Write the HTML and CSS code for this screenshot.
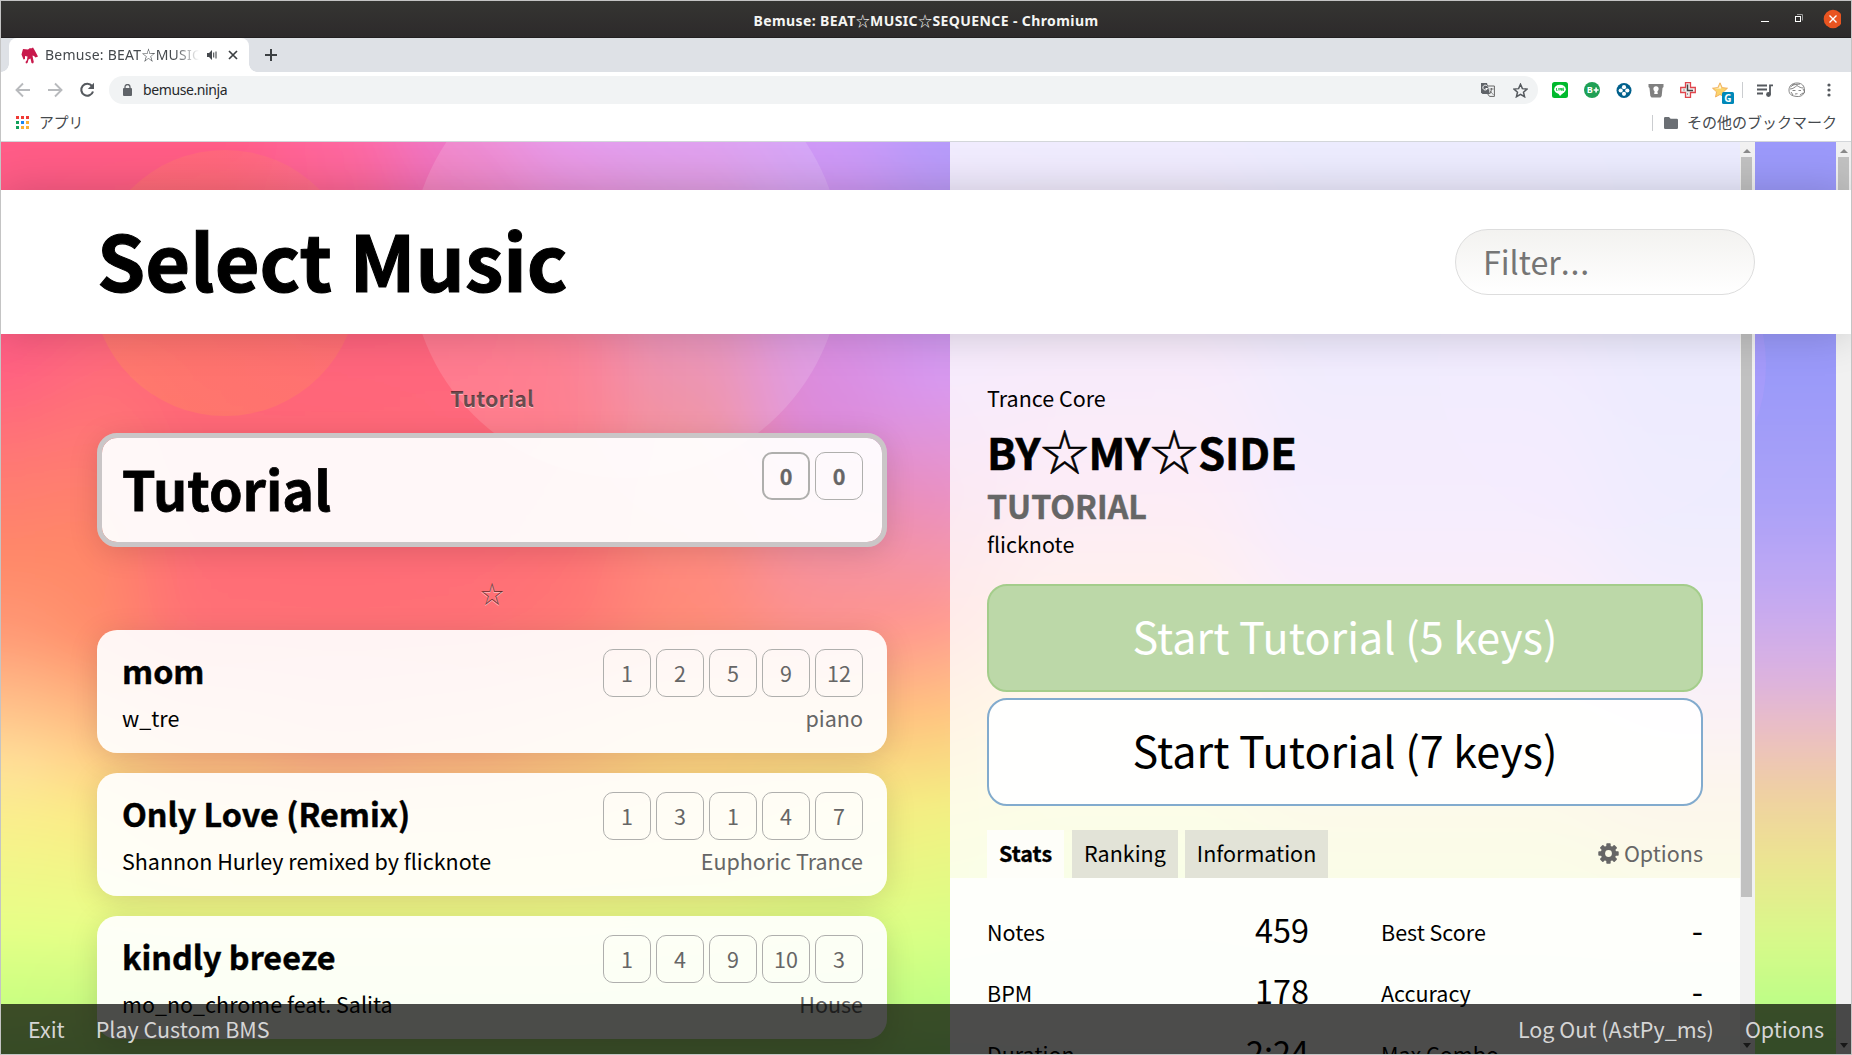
FILE: index.html
```html
<!DOCTYPE html>
<html lang="ja">
<head>
<meta charset="utf-8">
<title>Bemuse: BEAT☆MUSIC☆SEQUENCE</title>
<link rel="stylesheet" href="styles.css">
</head>
<body>
<div class="window">
  <div class="titlebar">
    <div class="titlebar-text">Bemuse: BEAT<span class="star">☆</span>MUSIC<span class="star">☆</span>SEQUENCE - Chromium</div>
    <svg class="window-buttons" width="80" height="20" viewBox="0 0 80 20">
      <path d="M0 12.500h8" stroke="#fff"/>
      <rect x="34.500" y="7.500" width="5" height="5" fill="none" stroke="#fff"/>
      <path d="M36 5.500h5.500v6" fill="none" stroke="#999"/>
      <circle cx="72" cy="10" r="9.300" fill="#e95420"/>
      <path d="M68.500 6.500l7 7m0-7l-7 7" stroke="#fff" stroke-width="1.400"/>
    </svg>
  </div>

  <div class="tabstrip">
    <div class="tab">
      <svg width="17" height="17" viewBox="0 0 17 17" fill="#c8194c"><path d="M2 2l5 .6L9 1l1 .5L12 .5l1.500 2.500L17 9.500l-2.500 1L13 9l-1.500-.5.5 3 .8 3.500-.8 1.500-1.500-.5-1-4.500-2 1-1 3.500-1.500.5-.5-1.500 1.500-2 .5-3.500L4 9v3l-1.500.5L.5 7.500z"/></svg>
      <span class="tab-title">Bemuse: BEAT<span class="star">☆</span>MUSIC</span>
      <svg class="speaker" width="12" height="12" viewBox="0 0 12 12"><path d="M1 4h2l3-3v10L3 8H1z" fill="#45494d"/><path d="M7.700 3.500v5M10 2.500v7" stroke="#45494d" stroke-width="1.100" fill="none"/></svg>
      <svg class="close" width="10" height="10" viewBox="0 0 10 10"><path d="M1 1l8 8m0-8l-8 8" stroke="#3c4043" stroke-width="1.700"/></svg>
    </div>
    <svg class="newtab" width="12" height="12" viewBox="0 0 12 12"><path d="M6 0v12M0 6h12" stroke="#3c4043" stroke-width="2"/></svg>
  </div>

  <div class="toolbar">
    <svg width="16" height="16" viewBox="0 0 16 16" fill="none" stroke="#b8babd" stroke-width="1.900"><path d="M15 8H2M8 1.500L1.500 8 8 14.500"/></svg>
    <svg width="16" height="16" viewBox="0 0 16 16" fill="none" stroke="#b8babd" stroke-width="1.900"><path d="M1 8h13M8 1.500L14.500 8 8 14.500"/></svg>
    <svg width="16" height="16" viewBox="0 0 16 16"><path d="M13 4A6 6 0 1 0 14 9.500" fill="none" stroke="#55595e" stroke-width="2.100"/><path d="M15 .8V7H8.800z" fill="#55595e"/></svg>
    <div class="omnibox">
      <svg width="9" height="12" viewBox="0 0 9 12"><rect y="4" width="9" height="8" rx="1" fill="#5f6368"/><path d="M2 5V3a2.500 2.500 0 0 1 5 0v2" fill="none" stroke="#5f6368" stroke-width="1.300"/></svg>
      <span class="url">bemuse.ninja</span>
      <svg class="translate" width="14" height="14" viewBox="0 0 14 14"><path d="M6 3h7.400v10.400H8.500L6 10" fill="#f1f3f4" stroke="#666"/><path d="M0 0h6l3 11H1.500L0 9.500z" fill="#5f6368"/><path d="M6.300 3.300A2.400 2.400 0 1 0 6.500 5.500H4.500" fill="none" stroke="#fff"/><path d="M8.500 6h4M10.500 5v1c0 2-1 4-2 5M9 7.500c1 2 2 3 3.500 4" fill="none" stroke="#666" stroke-width=".9"/></svg>
      <svg width="15" height="15" viewBox="0 0 24 24"><path d="M12 2l3 7 7.500.7-5.700 5 1.700 7.300-6.500-3.900L5.500 22l1.700-7.300-5.700-5L9 9z" fill="none" stroke="#55595e" stroke-width="2.400"/></svg>
    </div>
    <div class="extensions">
      <svg width="16" height="16" viewBox="0 0 16 16"><rect width="16" height="16" rx="2.500" fill="#00b92d"/><ellipse cx="8" cy="7.300" rx="5.800" ry="4.600" fill="#fff"/><path d="M6 11l2 3 4-4z" fill="#fff"/><path d="M4.500 6v2.500h1M6.800 6v2.500M8 8.500V6l1.500 2.500V6M12 6.200h-1.300v2.200H12M10.700 7.300H12" stroke="#00b92d" stroke-width=".8" fill="none"/></svg>
      <svg width="16" height="16" viewBox="0 0 16 16"><circle cx="8" cy="8" r="8" fill="#1fa055"/><text x="2.700" y="11.300" class="glyph-b">B</text><path d="M12.100 5.500v5M9.600 8h5" stroke="#fff" stroke-width="1.600"/></svg>
      <svg width="16" height="15" viewBox="-.5 0 16 15"><circle cx="7.500" cy="7.500" r="7.500" fill="#00608c"/><g fill="#fff"><circle cx="7.500" cy="4.200" r="2.100"/><circle cx="7.500" cy="10.800" r="2.100"/><circle cx="4.200" cy="7.500" r="2.100"/><circle cx="10.800" cy="7.500" r="2.100"/></g></svg>
      <svg width="16" height="15" viewBox="0 0 15 15"><path d="M0 1h15v3l-1 1-.8 8-1.200 1.500H3L1.800 13 1 5 0 4z" fill="#808080"/><circle cx="7.500" cy="5.800" r="2.600" fill="#fff"/><path d="M6.400 6h2.200l.7 5H5.700z" fill="#fff"/></svg>
      <svg width="16" height="16" viewBox="0 0 16 16"><path d="M5.500.7h5v4.800h4.800v5h-4.800v4.800h-5v-4.800H.7v-5h4.800z" fill="#eef0f0" stroke="#e0454c" stroke-width="1.300"/><path d="M7.500 2.500v6H13" stroke="#444" stroke-width="1.500" fill="none"/><path d="M3 8h2M7.500 13v-2" stroke="#999"/></svg>
      <svg class="star-badge" width="22" height="22" viewBox="0 0 22 22"><path d="M8 .8l2.200 4.800 5.300.6-4 3.600 1 5.200L8 12.500 3.500 15l1-5.200-4-3.600 5.300-.6z" fill="#fbd46c" stroke="#eda552" stroke-width=".8"/><path d="M8 2.500l1 4-7-.2 5.200-.5z" fill="#fff"/><rect x="10" y="10" width="12" height="12" rx="1.500" fill="#0088b8"/><text x="12.300" y="19.600" class="glyph-g">G</text></svg>
    </div>
    <i class="divider"></i>
    <svg class="queue" width="16" height="13" viewBox="0 0 16 13"><path d="M0 1.500h10M0 5.500h10M0 9.500h6" stroke="#55595e" stroke-width="1.800"/><path d="M13 10.500V1.300h3" fill="none" stroke="#55595e" stroke-width="1.800"/><circle cx="11.500" cy="10.500" r="2.400" fill="#55595e"/></svg>
    <svg class="avatar" width="18" height="16" viewBox="0 0 18 16" fill="none" stroke="#777" stroke-width=".9"><path d="M9 1C4 1 1 4 1 8s2 6 8 6.500c5 .3 7.500-2.500 7.500-6.500S14 1 9 1z"/><path d="M2 7c3 0 5-2 7-3.500C11 5 13 6 15.500 6M4.500 8.500h3M10.500 8.500h2.500M7 12l2.500-.3M15 7l1.800 3-2 2M4 3l8-1M3 10l2 3M12 13l3-2M2.500 5l4-3"/></svg>
    <svg class="menu" width="4" height="14" viewBox="0 0 4 14" fill="#55595e"><circle cx="2" cy="2" r="1.600"/><circle cx="2" cy="7" r="1.600"/><circle cx="2" cy="12" r="1.600"/></svg>
  </div>

  <div class="bookmarks">
    <svg width="13" height="13" viewBox="0 0 13 13"><path d="M0 0h3v3H0zM5 0h3v3H5zM10 0h3v3h-3z" fill="#f03a35"/><path d="M0 5h3v3H0zM0 10h3v3H0z" fill="#129f5a"/><path d="M5 5h3v3H5z" fill="#1a87f0"/><path d="M10 5h3v3h-3zM5 10h3v3H5zM10 10h3v3h-3z" fill="#fbb034"/></svg>
    <span class="apps">アプリ</span>
    <i class="divider"></i>
    <svg width="14" height="12" viewBox="0 0 14 12"><path d="M0 1.200Q0 0 1.200 0H5l1.600 1.700h6.200Q14 1.700 14 3v7.700Q14 12 12.800 12H1.200Q0 12 0 10.800z" fill="#6b6f74"/></svg>
    <span class="other">その他のブックマーク</span>
  </div>

  <div class="page">
    <svg class="backdrop" viewBox="1 142 1835 912" preserveAspectRatio="none">
      <defs>
        <filter id="soft" x="-10%" y="-5%" width="120%" height="110%"><feGaussianBlur stdDeviation="38 14"/></filter>
        <linearGradient id="c0" x2="0" y2="1"><stop offset="0" stop-color="#ff5b87"/><stop offset=".2" stop-color="#ff5a86"/><stop offset=".26" stop-color="#ff5f82"/><stop offset=".36" stop-color="#ff7874"/><stop offset=".46" stop-color="#ff8969"/><stop offset=".53" stop-color="#ff9875"/><stop offset=".6" stop-color="#ffbb88"/><stop offset=".67" stop-color="#ffe099"/><stop offset=".74" stop-color="#f8f18b"/><stop offset=".84" stop-color="#e6ff87"/><stop offset=".93" stop-color="#c5ff80"/><stop offset="1" stop-color="#a8f57c"/></linearGradient>
        <linearGradient id="c1" x2="0" y2="1"><stop offset="0" stop-color="#ff5a86"/><stop offset=".2" stop-color="#ff6380"/><stop offset=".33" stop-color="#ff7874"/><stop offset=".43" stop-color="#ff8668"/><stop offset=".54" stop-color="#ff8d68"/><stop offset=".64" stop-color="#ffc283"/><stop offset=".72" stop-color="#fdea85"/><stop offset=".84" stop-color="#e8ff88"/><stop offset="1" stop-color="#a8f57c"/></linearGradient>
        <linearGradient id="c2" x2="0" y2="1"><stop offset="0" stop-color="#ff5a88"/><stop offset=".2" stop-color="#ff6579"/><stop offset=".33" stop-color="#ff6777"/><stop offset=".53" stop-color="#ff7076"/><stop offset=".64" stop-color="#ffad80"/><stop offset=".74" stop-color="#ffdc85"/><stop offset=".84" stop-color="#ecff88"/><stop offset="1" stop-color="#a8f57c"/></linearGradient>
        <linearGradient id="c3" x2="0" y2="1"><stop offset="0" stop-color="#fe67a4"/><stop offset=".2" stop-color="#ff637f"/><stop offset=".33" stop-color="#ff6777"/><stop offset=".53" stop-color="#ff6f76"/><stop offset=".64" stop-color="#ff9d84"/><stop offset=".74" stop-color="#ffdc85"/><stop offset=".84" stop-color="#ecff88"/><stop offset="1" stop-color="#a8f57c"/></linearGradient>
        <linearGradient id="c4" x2="0" y2="1"><stop offset="0" stop-color="#ea7cd0"/><stop offset=".1" stop-color="#f070b8"/><stop offset=".2" stop-color="#ff6480"/><stop offset=".33" stop-color="#ff687a"/><stop offset=".53" stop-color="#ff7076"/><stop offset=".64" stop-color="#ffa880"/><stop offset=".74" stop-color="#ffdc85"/><stop offset=".84" stop-color="#ecff88"/><stop offset="1" stop-color="#a8f57c"/></linearGradient>
        <linearGradient id="c5" x2="0" y2="1"><stop offset="0" stop-color="#df90f4"/><stop offset=".12" stop-color="#e87cc8"/><stop offset=".23" stop-color="#fd6c84"/><stop offset=".34" stop-color="#fe6c7a"/><stop offset=".44" stop-color="#ff7074"/><stop offset=".53" stop-color="#ff7873"/><stop offset=".64" stop-color="#ffb880"/><stop offset=".74" stop-color="#ffe085"/><stop offset=".84" stop-color="#ecff88"/><stop offset="1" stop-color="#a8f57c"/></linearGradient>
        <linearGradient id="c6" x2="0" y2="1"><stop offset="0" stop-color="#d894f7"/><stop offset=".2" stop-color="#e584b8"/><stop offset=".3" stop-color="#ec849c"/><stop offset=".42" stop-color="#ff8880"/><stop offset=".53" stop-color="#ff8c78"/><stop offset=".64" stop-color="#ffcc80"/><stop offset=".74" stop-color="#ffe585"/><stop offset=".84" stop-color="#e6ff88"/><stop offset="1" stop-color="#a8f57c"/></linearGradient>
        <linearGradient id="c7" x2="0" y2="1"><stop offset="0" stop-color="#cb9bfb"/><stop offset=".2" stop-color="#d890e6"/><stop offset=".32" stop-color="#dc8bdc"/><stop offset=".42" stop-color="#f090a8"/><stop offset=".54" stop-color="#ff938c"/><stop offset=".62" stop-color="#ffbf80"/><stop offset=".71" stop-color="#f9e985"/><stop offset=".84" stop-color="#dfff85"/><stop offset="1" stop-color="#a8f57c"/></linearGradient>
        <linearGradient id="c8" x2="0" y2="1"><stop offset="0" stop-color="#b19bfc"/><stop offset=".2" stop-color="#c998f0"/><stop offset=".28" stop-color="#d899f0"/><stop offset=".4" stop-color="#e98fc0"/><stop offset=".52" stop-color="#ff9890"/><stop offset=".62" stop-color="#ffc480"/><stop offset=".72" stop-color="#f3f082"/><stop offset=".84" stop-color="#daff85"/><stop offset=".94" stop-color="#b8ff84"/><stop offset="1" stop-color="#a0f57c"/></linearGradient>
        <linearGradient id="c9" x2="0" y2="1"><stop offset="0" stop-color="#a89bfa"/><stop offset=".2" stop-color="#cc9bf0"/><stop offset=".38" stop-color="#f0a0d8"/><stop offset=".5" stop-color="#ffb4a8"/><stop offset=".64" stop-color="#fbe690"/><stop offset=".76" stop-color="#e6fa88"/><stop offset="1" stop-color="#a8f98c"/></linearGradient>
        <linearGradient id="c10" x2="0" y2="1"><stop offset="0" stop-color="#9c9bf8"/><stop offset=".22" stop-color="#b09cf8"/><stop offset=".42" stop-color="#d0a4f4"/><stop offset=".54" stop-color="#f2a8d8"/><stop offset=".66" stop-color="#f5d8a0"/><stop offset=".78" stop-color="#e8f088"/><stop offset="1" stop-color="#a8f9a0"/></linearGradient>
        <linearGradient id="c11" x2="0" y2="1"><stop offset="0" stop-color="#9b99fa"/><stop offset=".26" stop-color="#9999f9"/><stop offset=".41" stop-color="#aca2f8"/><stop offset=".5" stop-color="#c4a9f2"/><stop offset=".58" stop-color="#dcb2e0"/><stop offset=".64" stop-color="#ebbfc2"/><stop offset=".7" stop-color="#f0d0a2"/><stop offset=".77" stop-color="#ece491"/><stop offset=".85" stop-color="#d8f98a"/><stop offset=".94" stop-color="#b5ff86"/><stop offset="1" stop-color="#a0f57c"/></linearGradient>
        <linearGradient id="orb" x1="1" y1="0" x2=".3" y2="1"><stop offset="0" stop-color="#ff9a50" stop-opacity=".12"/><stop offset="1" stop-color="#ff9a50" stop-opacity=".28"/></linearGradient>
      </defs>
      <g filter="url(#soft)">
        <rect x="-150" y="112" width="210" height="972" fill="url(#c0)"/>
        <rect x="60" y="112" width="80" height="972" fill="url(#c1)"/>
        <rect x="140" y="112" width="140" height="972" fill="url(#c2)"/>
        <rect x="280" y="112" width="120" height="972" fill="url(#c3)"/>
        <rect x="400" y="112" width="120" height="972" fill="url(#c4)"/>
        <rect x="520" y="112" width="100" height="972" fill="url(#c5)"/>
        <rect x="620" y="112" width="140" height="972" fill="url(#c6)"/>
        <rect x="760" y="112" width="130" height="972" fill="url(#c7)"/>
        <rect x="890" y="112" width="110" height="972" fill="url(#c8)"/>
        <rect x="1000" y="112" width="250" height="972" fill="url(#c9)"/>
        <rect x="1250" y="112" width="350" height="972" fill="url(#c10)"/>
        <rect x="1600" y="112" width="400" height="972" fill="url(#c11)"/>
      </g>
      <circle cx="225" cy="283" r="133" fill="url(#orb)"/>
      <circle cx="626" cy="262" r="216" fill="#fff" fill-opacity=".14"/>
      <circle cx="1602" cy="365" r="164" fill="#c8a0ff" fill-opacity=".22"/>
    </svg>

    <div class="columns">
      <div class="song-list">
        <h2 class="group">Tutorial</h2>
        <div class="song song-active">
          <div class="song-row"><h3>Tutorial</h3><div class="levels bold"><span class="current">0</span><span>0</span></div></div>
        </div>
        <h2 class="group second">☆</h2>
        <div class="song">
          <div class="song-row"><h3>mom</h3><div class="levels"><span>1</span><span>2</span><span>5</span><span>9</span><span>12</span></div></div>
          <div class="song-meta"><span>w_tre</span><span class="genre">piano</span></div>
        </div>
        <div class="song">
          <div class="song-row"><h3>Only Love (Remix)</h3><div class="levels"><span>1</span><span>3</span><span>1</span><span>4</span><span>7</span></div></div>
          <div class="song-meta"><span>Shannon Hurley remixed by flicknote</span><span class="genre">Euphoric Trance</span></div>
        </div>
        <div class="song">
          <div class="song-row"><h3>kindly breeze</h3><div class="levels"><span>1</span><span>4</span><span>9</span><span>10</span><span>3</span></div></div>
          <div class="song-meta"><span>mo_no_chrome feat. Salita</span><span class="genre">House</span></div>
        </div>
      </div>

      <div class="detail">
        <div class="detail-body">
          <div class="detail-top">
            <div class="d-genre">Trance Core</div>
            <h1 class="d-title">BY<span class="big-star">☆</span>MY<span class="big-star">☆</span>SIDE</h1>
            <div class="d-subtitle">TUTORIAL</div>
            <div class="d-artist">flicknote</div>
            <div class="play play-5">Start Tutorial (5 keys)</div>
            <div class="play play-7">Start Tutorial (7 keys)</div>
            <div class="tabs">
              <span class="dtab dtab-on">Stats</span><span class="dtab">Ranking</span><span class="dtab">Information</span>
              <span class="d-options"><svg width="21" height="21" viewBox="-10.500 -10.500 21 21" fill="#666"><g><rect x="-2.200" y="-10.200" width="4.400" height="20.400" rx=".8"/><rect x="-2.200" y="-10.200" width="4.400" height="20.400" rx=".8" transform="rotate(45)"/><rect x="-2.200" y="-10.200" width="4.400" height="20.400" rx=".8" transform="rotate(90)"/><rect x="-2.200" y="-10.200" width="4.400" height="20.400" rx=".8" transform="rotate(135)"/></g><circle r="5.500" fill="none" stroke="#666" stroke-width="4.500"/><circle r="3.400" fill="#fcfbe9"/></svg>Options</span>
            </div>
          </div>
          <div class="stats">
            <div class="stat"><span>Notes</span><b>459</b></div><div class="stat"><span>Best Score</span><b>-</b></div>
            <div class="stat"><span>BPM</span><b>178</b></div><div class="stat"><span>Accuracy</span><b>-</b></div>
            <div class="stat"><span>Duration</span><b>2:24</b></div><div class="stat"><span>Max Combo</span><b>-</b></div>
          </div>
        </div>
        <div class="scrollbar inner-scroll"><i class="up"></i><i class="thumb thumb-long"></i><i class="down"></i></div>
      </div>
    </div>
    <div class="scrollbar page-scroll"><i class="up"></i><i class="thumb"></i><i class="down"></i></div>

    <div class="header"><div class="heading">Select Music</div><div class="filter">Filter<span class="dots">...</span></div></div>
    <div class="bottombar"><span>Exit</span><span>Play Custom BMS</span><span class="push">Log Out (AstPy_ms)</span><span>Options</span></div>
  </div>
</div>
</body>
</html>
```
FILE: styles.css
```css
* { box-sizing: border-box; }
body { margin: 0; background: #c4c4c4; }
h1, h2, h3 { margin: 0; font: inherit; }
svg { display: block; flex: none; }

.window {
  width: 1852px; height: 1055px; padding: 1px;
  display: flex; flex-direction: column;
  font-family: "Noto Sans", "Noto Sans CJK JP", sans-serif;
  overflow: hidden;
}
.star { font-family: "Noto Sans CJK JP", sans-serif; font-weight: 400; line-height: 1; }

/* Browser chrome */
.titlebar {
  height: 37px; flex: none; display: grid; grid-template-columns: 1fr auto 1fr; align-items: center;
  background: linear-gradient(#353532, #2d2a2b); border-bottom: 1px solid #222021;
  color: #f5f5f3; font-size: 14px; font-weight: 700; line-height: 20px; letter-spacing: .4px;
}
.titlebar-text { grid-column: 2; padding-top: 4px; white-space: nowrap; }
.window-buttons { justify-self: end; margin-right: 10px; }

.tabstrip { height: 34px; flex: none; display: flex; align-items: center; background: #dee1e6; padding-left: 8px; }
.tab {
  position: relative; width: 240px; height: 34px; display: flex; align-items: center; padding-left: 12px;
  background: #fff; border-radius: 8px 8px 0 0; color: #45494d; font-size: 14px;
}
.tab::before, .tab::after { content: ""; position: absolute; bottom: 0; width: 8px; height: 8px; }
.tab::before { left: -8px; background: radial-gradient(circle at 0 0, transparent 7.5px, #fff 8px); }
.tab::after { right: -8px; background: radial-gradient(circle at 100% 0, transparent 7.5px, #fff 8px); }
.tab-title {
  width: 154px; margin-left: 7px; overflow: hidden; white-space: nowrap; line-height: 20px; letter-spacing: .25px;
  -webkit-mask-image: linear-gradient(90deg, #000 84%, transparent);
  mask-image: linear-gradient(90deg, #000 84%, transparent);
}
.speaker { margin-left: 7px; }
.close { margin-left: 10px; }
.newtab { margin-left: 16px; }

.toolbar { height: 36px; flex: none; display: flex; align-items: center; background: #fff; padding: 0 18px 0 14px; gap: 16px; }
.omnibox {
  flex: none; width: 1429px; height: 28px; margin-left: -2px; border-radius: 14px; background: #f1f3f4;
  display: flex; align-items: center; padding: 0 10px 0 14px; color: #26282b; font-size: 14px;
}
.url { margin-left: 11px; line-height: 20px; letter-spacing: -.4px; }
.translate { margin-left: auto; margin-right: 18px; }
.extensions { display: flex; align-items: center; gap: 16px; margin-left: -2px; width: 190px; flex: none; }
.star-badge { margin-top: 6px; }
.glyph-b { font: 700 9px "Open Sans", sans-serif; fill: #fff; }
.glyph-g { font: 700 10px "Open Sans", sans-serif; fill: #fff; }
.divider { width: 1px; height: 16px; background: #cbcdd0; flex: none; }
.toolbar .divider { margin-left: -16px; }
.queue { margin-left: -2px; }
.avatar { margin-left: -1px; }
.menu { margin-left: 5px; }

.bookmarks {
  height: 34px; flex: none; display: flex; align-items: center; background: #fff; padding: 0 14px 4px 15px;
  border-bottom: 1px solid #d3d6da; color: #45494d; font: 15px/24px "Noto Sans CJK JP", sans-serif;
}
.bookmarks .apps { margin-left: 10px; margin-right: auto; font-size: 14.8px; padding-bottom: 2px; }
.bookmarks .other { padding-bottom: 1px; }
.bookmarks .divider + svg { margin-left: 11px; margin-right: 9px; }

/* Game page */
.page {
  position: relative; flex: 1; min-height: 0; overflow: hidden; display: flex;
  font: 21.5px/32px "Noto Sans CJK JP", sans-serif; color: #000;
}
.backdrop { position: absolute; left: 0; top: 0; width: 1835px; height: 912px; }
.columns { position: relative; width: 1835px; display: flex; }
.song-list { width: 949px; padding: 240px 63px 0 96px; }
.group { height: 32px; margin-bottom: 19px; text-align: center; font-weight: 700; color: rgba(0, 0, 0, .6); text-shadow: 0 1px 0 rgba(255, 255, 255, .5); }
.group.second { font-weight: 400; font-size: 23.5px; margin: 30px 0 21px; }
.song {
  height: 123px; margin-bottom: 20px; padding: 19px 24px 19px 25px; border-radius: 20px;
  background: rgba(255, 255, 255, .92); box-shadow: 0 5px 30px rgba(0, 0, 0, .13);
}
.song-row { display: flex; justify-content: space-between; height: 52px; }
.song h3 { font-size: 32.3px; line-height: 42px; font-weight: 700; }
.song-active { height: 114px; padding: 14px 19px 14px 20px; border: 5px solid #cac6c7; background: rgba(255, 255, 255, .95); background-clip: padding-box; }
.song-active h3 { font-size: 53.8px; line-height: 60px; margin-top: 6px; }
.levels { display: flex; gap: 5px; color: #666; }
.levels span { width: 48px; height: 48px; border: 1px solid #afafad; border-radius: 10px; text-align: center; line-height: 45px; }
.levels .current { border-width: 2px; line-height: 43px; }
.levels.bold span { line-height: 46px; }
.levels.bold .current { line-height: 44px; }
.bold, h1, h3, .heading { font-weight: 700; -webkit-text-stroke: .014em currentColor; }
.song-meta { display: flex; justify-content: space-between; padding-top: 1px; }
.genre { color: #666; }

.detail { width: 805px; display: flex; background: rgba(255, 255, 255, .8); }
.detail-body { width: 790px; }
.detail-top { height: 736px; padding: 240px 37px 0; }
.d-title { font-size: 43.2px; line-height: 56px; height: 56px; font-weight: 700; margin-top: 9px; }
.big-star { font-size: 47.8px; line-height: 1; font-weight: 400; }
.d-subtitle { font-size: 32.2px; line-height: 40px; font-weight: 700; color: #666; margin-top: 6px; -webkit-text-stroke: .014em currentColor; }
.d-artist { margin-top: 3px; margin-bottom: 24px; }
.play { height: 108px; margin-bottom: 6px; border-radius: 20px; border: 2px solid; text-align: center; font-size: 43.1px; line-height: 98px; }
.play-5 { background: #bcd8a8; border-color: #a4cd8b; color: #fff; }
.play-7 { background: rgba(255, 255, 255, .93); border-color: #82abce; background-clip: padding-box; }
.tabs { display: flex; gap: 7px; margin-top: 24px; line-height: 46px; }
.dtab { height: 48px; padding: 0 12px; background: #e2e3d7; }
.dtab-on { background: #fefef9; font-weight: 700; margin-right: 1px; -webkit-text-stroke: .014em currentColor; }
.d-options { margin-left: auto; display: flex; align-items: center; gap: 5px; color: #666; height: 46px; }
.stats { height: 176px; padding: 20px 37px 0; display: grid; grid-template-columns: 322px 322px; column-gap: 72px; grid-auto-rows: 61px; background: rgba(255, 255, 255, .82); overflow: hidden; }
.stat { display: flex; justify-content: space-between; align-items: center; }
.stat span { padding-top: 6px; }
.stat b { font-size: 32.4px; font-weight: 400; }

.scrollbar { width: 15px; height: 912px; background: #f1f1f1; display: flex; flex-direction: column; align-items: center; }
.inner-scroll { padding-right: 2px; }
.up, .down { border: 4px solid transparent; width: 0; height: 0; }
.up { border-bottom: 4px solid #8a8a8a; border-top: 0; margin: 7px 0 4px; }
.down { border-top: 5px solid #505050; border-bottom: 0; margin-top: auto; margin-bottom: 6px; }
.thumb { width: 11px; height: 130px; background: #c1c1c1; }
.thumb-long { height: 740px; }
.page-scroll { position: relative; }

.header {
  position: absolute; left: 0; right: 0; top: 48px; height: 144px; padding: 0 96px;
  display: flex; align-items: center; justify-content: space-between;
  background: #fff; box-shadow: 0 0 40px rgba(0, 0, 0, .18);
}
.heading { font-size: 77.4px; line-height: 100px; padding-bottom: 8px; }
.filter {
  width: 300px; height: 66px; border: 1px solid #ddd; border-radius: 33px; padding: 0 27px;
  background: linear-gradient(#f3f2f0, #fff); color: #757575; font-size: 32.2px; line-height: 62px;
}
.dots { letter-spacing: .8px; }
.bottombar {
  position: absolute; left: 0; right: 0; bottom: 0; height: 50px; padding: 0 27px;
  display: flex; gap: 31px; background: rgba(0, 0, 0, .7); color: #d5d5d5; line-height: 50px;
}
.push { margin-left: auto; }
```
